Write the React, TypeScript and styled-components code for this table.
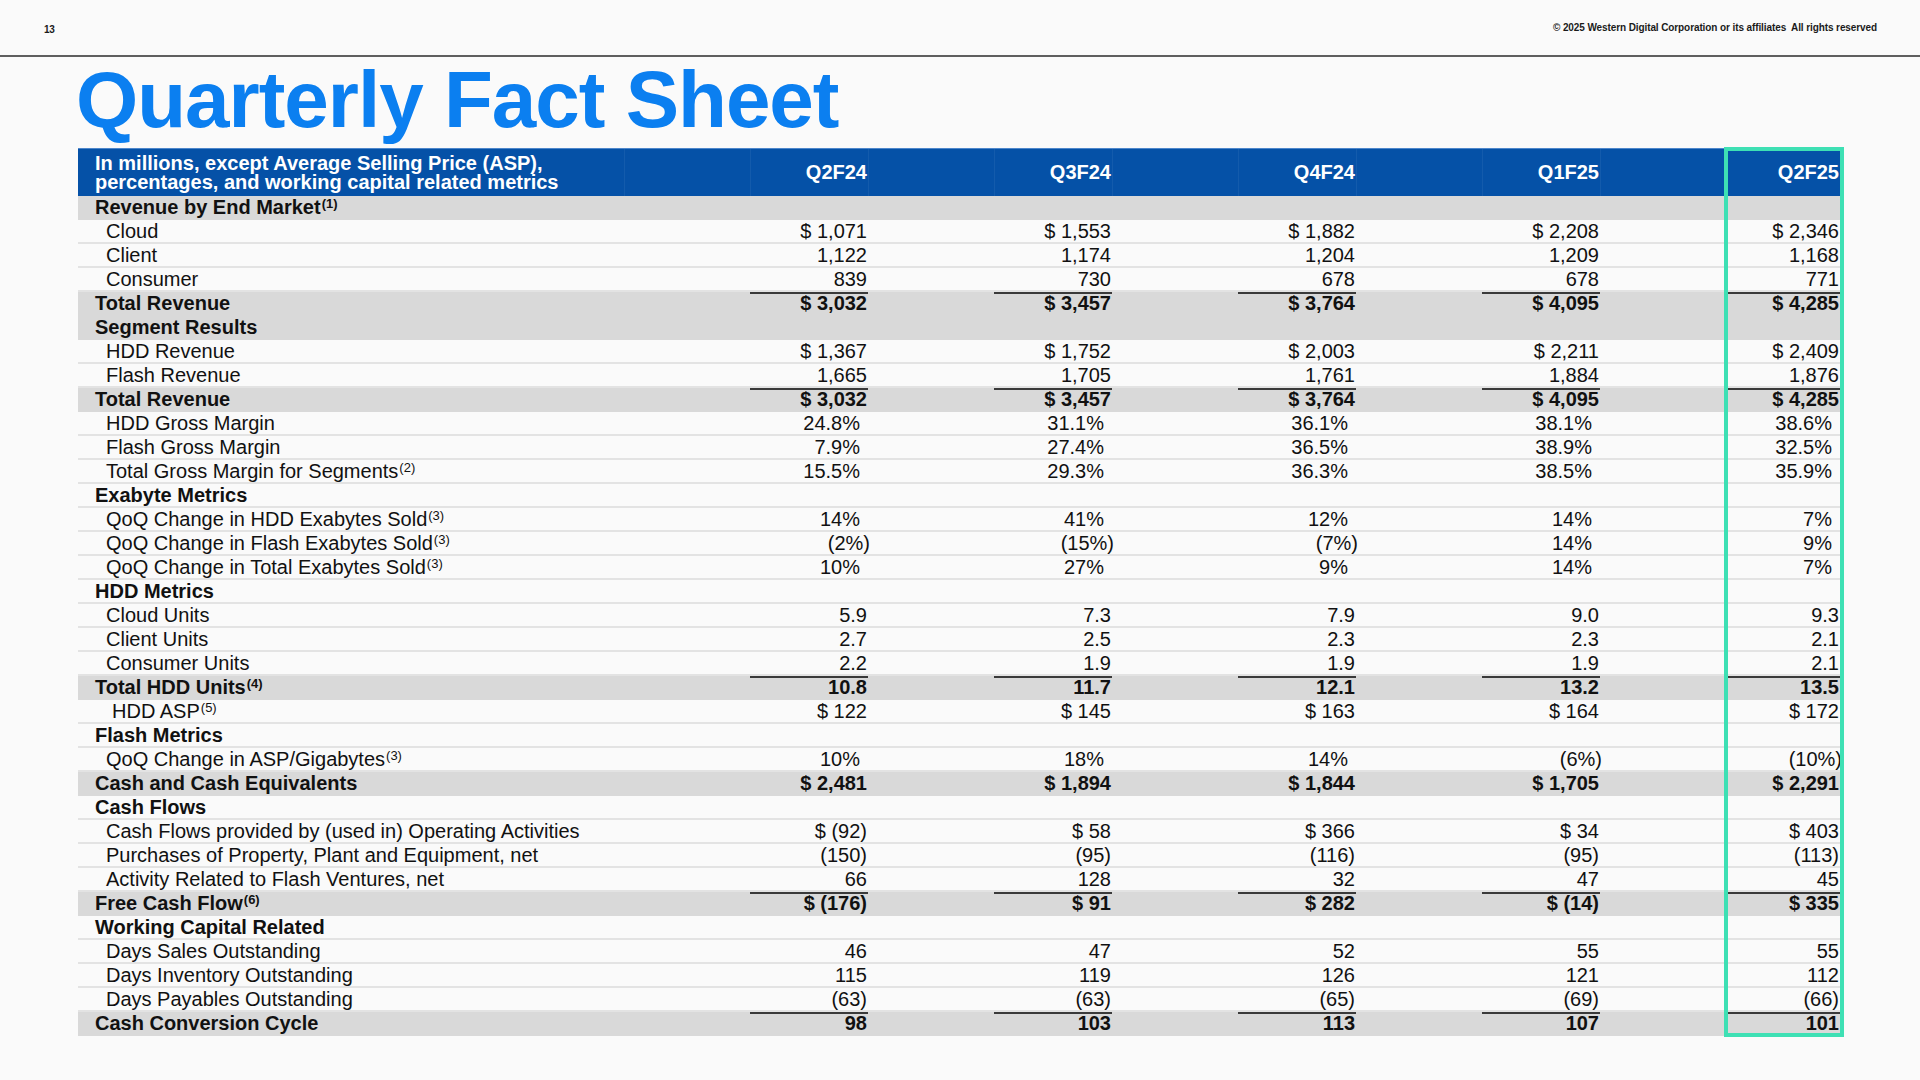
import React from 'react';
import styled, { createGlobalStyle } from 'styled-components';

// fact sheet page, slide 13

const GlobalStyle = createGlobalStyle`
  html, body {
    margin: 0;
    padding: 0;
    background: #fafafa;
  }
  body {
    font-family: 'Liberation Sans', Arial, Helvetica, sans-serif;
    color: #111;
  }
`;

const COLS = '546px repeat(5, 126px 118px)';

const Page = styled.div`
  width: 1920px;
  height: 1080px;
  background: #fafafa;
  overflow: hidden;
`;

const TopBar = styled.header`
  height: 55px;
  border-bottom: 2px solid #5e5e5e;
  display: flex;
  align-items: center;
  justify-content: space-between;
  padding: 0 43px 0 44px;
  font-size: 10px;
  font-weight: bold;
  color: #1a1a1a;
`;

const PageNumber = styled.span`
  padding-top: 3px;
  letter-spacing: -0.4px;
`;

const Copyright = styled.span`
  white-space: pre;
  letter-spacing: -0.1px;
`;

const Title = styled.h1`
  margin: 3px 0 0 76px;
  height: 80px;
  font-size: 80px;
  line-height: 80px;
  font-weight: bold;
  letter-spacing: -1px;
  color: #0b7ff0;
`;

const Table = styled.div`
  position: relative;
  margin: 8px 0 0 78px;
  width: 1766px;
`;

const HeaderRow = styled.div`
  display: grid;
  grid-template-columns: ${COLS};
  box-sizing: border-box;
  height: 48px;
  background: #0551a7;
  border-top: 1px solid #4d86cb;
  color: #fff;
  font-size: 20px;
  font-weight: bold;
`;

const HeaderLabel = styled.div`
  display: flex;
  flex-direction: column;
  justify-content: center;
  padding-left: 17px;
  line-height: 19px;
`;

const HeaderCell = styled.div<{ $last?: boolean }>`
  display: flex;
  align-items: center;
  justify-content: flex-end;
  padding-right: ${p => (p.$last ? 5 : 1)}px;
  border-left: 1px solid rgba(255, 255, 255, 0.06);
`;

const Row = styled.div<{ $shaded: boolean }>`
  display: grid;
  grid-template-columns: ${COLS};
  box-sizing: border-box;
  height: 24px;
  background: ${p => (p.$shaded ? '#d9d9d9' : '#fafafa')};
  border-bottom: 2px solid ${p => (p.$shaded ? '#d9d9d9' : '#e3e3e3')};
  font-size: 20px;
  line-height: 22px;
`;

const Label = styled.div<{ $indent: number; $bold: boolean }>`
  padding-left: ${p => p.$indent}px;
  font-weight: ${p => (p.$bold ? 'bold' : 'normal')};
  white-space: nowrap;
`;

const Spacer = styled.div``;

const Value = styled.div<{ $bold: boolean; $rule: boolean; $last?: boolean }>`
  text-align: right;
  white-space: nowrap;
  padding-right: ${p => (p.$last ? 5 : 1)}px;
  font-weight: ${p => (p.$bold ? 'bold' : 'normal')};
  box-shadow: ${p => (p.$rule ? 'inset 0 2px 0 #3a3a3a' : 'none')};
`;

const Figure = styled.span<{ $shift: number }>`
  display: inline-block;
  margin-right: ${p => p.$shift}px;
`;

const Sup = styled.sup`
  font-size: 13px;
  line-height: 0;
  vertical-align: 6px;
  margin-left: 1px;
`;

const Highlight = styled.div`
  position: absolute;
  top: -1px;
  bottom: -1px;
  left: 1646px;
  width: 120px;
  box-sizing: border-box;
  border: 4px solid #3ee0b4;
  pointer-events: none;
`;

type Kind = 'group' | 'total' | 'section' | 'item';

interface Line {
  label: string;
  kind: Kind;
  sup?: string;
  indent?: number;
  rule?: boolean;
  values?: string[];
}

const quarters = ['Q2F24', 'Q3F24', 'Q4F24', 'Q1F25', 'Q2F25'];

const lines: Line[] = [
  { label: 'Revenue by End Market', sup: '(1)', kind: 'group' },
  { label: 'Cloud', kind: 'item', values: ['$ 1,071', '$ 1,553', '$ 1,882', '$ 2,208', '$ 2,346'] },
  { label: 'Client', kind: 'item', values: ['1,122', '1,174', '1,204', '1,209', '1,168'] },
  { label: 'Consumer', kind: 'item', values: ['839', '730', '678', '678', '771'] },
  { label: 'Total Revenue', kind: 'total', rule: true, values: ['$ 3,032', '$ 3,457', '$ 3,764', '$ 4,095', '$ 4,285'] },
  { label: 'Segment Results', kind: 'group' },
  { label: 'HDD Revenue', kind: 'item', values: ['$ 1,367', '$ 1,752', '$ 2,003', '$ 2,211', '$ 2,409'] },
  { label: 'Flash Revenue', kind: 'item', values: ['1,665', '1,705', '1,761', '1,884', '1,876'] },
  { label: 'Total Revenue', kind: 'total', rule: true, values: ['$ 3,032', '$ 3,457', '$ 3,764', '$ 4,095', '$ 4,285'] },
  { label: 'HDD Gross Margin', kind: 'item', values: ['24.8%', '31.1%', '36.1%', '38.1%', '38.6%'] },
  { label: 'Flash Gross Margin', kind: 'item', values: ['7.9%', '27.4%', '36.5%', '38.9%', '32.5%'] },
  { label: 'Total Gross Margin for Segments', sup: '(2)', kind: 'item', values: ['15.5%', '29.3%', '36.3%', '38.5%', '35.9%'] },
  { label: 'Exabyte Metrics', kind: 'section' },
  { label: 'QoQ Change in HDD Exabytes Sold', sup: '(3)', kind: 'item', values: ['14%', '41%', '12%', '14%', '7%'] },
  { label: 'QoQ Change in Flash Exabytes Sold', sup: '(3)', kind: 'item', values: ['(2%)', '(15%)', '(7%)', '14%', '9%'] },
  { label: 'QoQ Change in Total Exabytes Sold', sup: '(3)', kind: 'item', values: ['10%', '27%', '9%', '14%', '7%'] },
  { label: 'HDD Metrics', kind: 'section' },
  { label: 'Cloud Units', kind: 'item', values: ['5.9', '7.3', '7.9', '9.0', '9.3'] },
  { label: 'Client Units', kind: 'item', values: ['2.7', '2.5', '2.3', '2.3', '2.1'] },
  { label: 'Consumer Units', kind: 'item', values: ['2.2', '1.9', '1.9', '1.9', '2.1'] },
  { label: 'Total HDD Units', sup: '(4)', kind: 'total', rule: true, values: ['10.8', '11.7', '12.1', '13.2', '13.5'] },
  { label: 'HDD ASP', sup: '(5)', kind: 'item', indent: 34, values: ['$ 122', '$ 145', '$ 163', '$ 164', '$ 172'] },
  { label: 'Flash Metrics', kind: 'section' },
  { label: 'QoQ Change in ASP/Gigabytes', sup: '(3)', kind: 'item', values: ['10%', '18%', '14%', '(6%)', '(10%)'] },
  { label: 'Cash and Cash Equivalents', kind: 'total', values: ['$ 2,481', '$ 1,894', '$ 1,844', '$ 1,705', '$ 2,291'] },
  { label: 'Cash Flows', kind: 'section' },
  { label: 'Cash Flows provided by (used in) Operating Activities', kind: 'item', values: ['$ (92)', '$ 58', '$ 366', '$ 34', '$ 403'] },
  { label: 'Purchases of Property, Plant and Equipment, net', kind: 'item', values: ['(150)', '(95)', '(116)', '(95)', '(113)'] },
  { label: 'Activity Related to Flash Ventures, net', kind: 'item', values: ['66', '128', '32', '47', '45'] },
  { label: 'Free Cash Flow', sup: '(6)', kind: 'total', rule: true, values: ['$ (176)', '$ 91', '$ 282', '$ (14)', '$ 335'] },
  { label: 'Working Capital Related', kind: 'section' },
  { label: 'Days Sales Outstanding', kind: 'item', values: ['46', '47', '52', '55', '55'] },
  { label: 'Days Inventory Outstanding', kind: 'item', values: ['115', '119', '126', '121', '112'] },
  { label: 'Days Payables Outstanding', kind: 'item', values: ['(63)', '(63)', '(65)', '(69)', '(66)'] },
  { label: 'Cash Conversion Cycle', kind: 'total', rule: true, values: ['98', '103', '113', '107', '101'] },
];

// percentages keep a slot for the closing paren, negatives hang over it
function shiftFor(v: string) {
  if (v.endsWith('%)')) return -3;
  if (v.endsWith('%')) return 7;
  return 0;
}

export default function App() {
  return (
    <Page>
      <GlobalStyle />
      <TopBar>
        <PageNumber>13</PageNumber>
        <Copyright>© 2025 Western Digital Corporation or its affiliates  All rights reserved</Copyright>
      </TopBar>

      <Title>Quarterly Fact Sheet</Title>

      <Table>
        <HeaderRow>
          <HeaderLabel>
            <span>In millions, except Average Selling Price (ASP),</span>
            <span>percentages, and working capital related metrics</span>
          </HeaderLabel>
          {quarters.map((q, i) => (
            <React.Fragment key={q}>
              <HeaderCell />
              <HeaderCell $last={i === quarters.length - 1}>{q}</HeaderCell>
            </React.Fragment>
          ))}
        </HeaderRow>

        {lines.map((line, idx) => {
          const shaded = line.kind === 'group' || line.kind === 'total';
          const bold = line.kind !== 'item';
          const indent = line.indent ?? (bold ? 17 : 28);
          return (
            <Row key={idx} $shaded={shaded}>
              <Label $indent={indent} $bold={bold}>
                {line.label}
                {line.sup && <Sup>{line.sup}</Sup>}
              </Label>
              {quarters.map((q, i) => {
                const v = line.values ? line.values[i] : '';
                return (
                  <React.Fragment key={q}>
                    <Spacer />
                    <Value $bold={bold} $rule={!!line.rule} $last={i === quarters.length - 1}>
                      {v && <Figure $shift={shiftFor(v)}>{v}</Figure>}
                    </Value>
                  </React.Fragment>
                );
              })}
            </Row>
          );
        })}

        <Highlight />
      </Table>
    </Page>
  );
}
